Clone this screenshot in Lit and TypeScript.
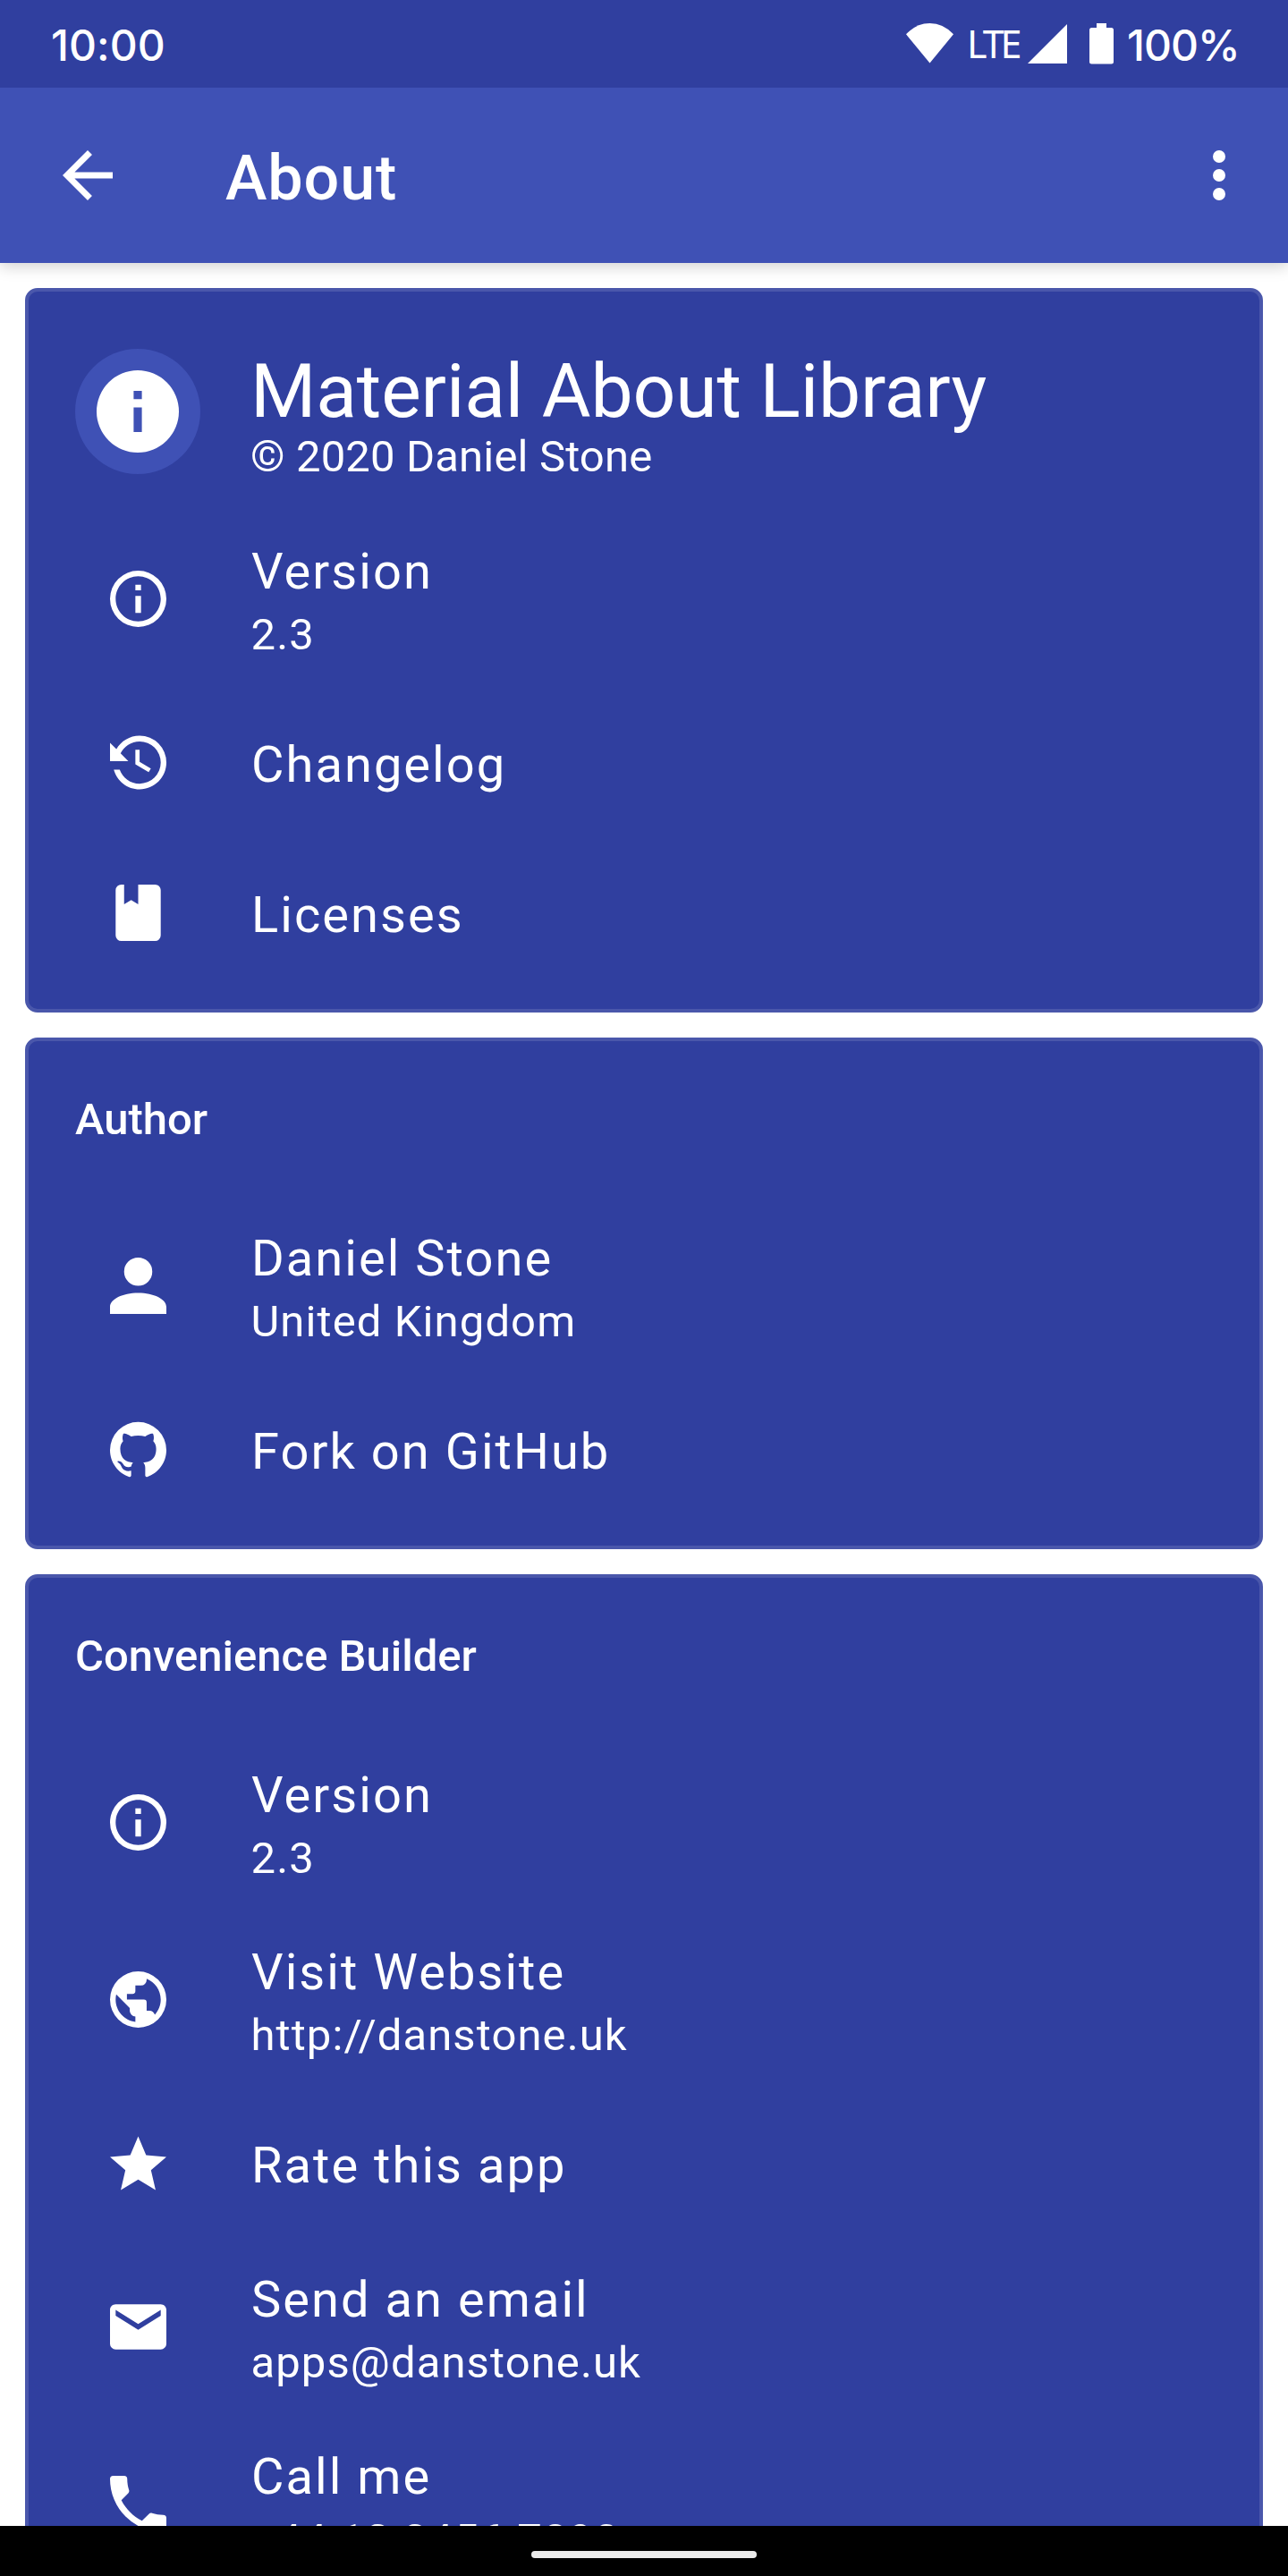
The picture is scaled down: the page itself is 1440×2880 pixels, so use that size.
import { LitElement, html, css, svg, nothing } from "lit";
import { customElement, property } from "lit/decorators.js";

interface Icon {
  box: string;
  path: string;
}

// Each viewBox is trimmed to the bounds of its glyph, so glyphs fill the icon slot.
const ICONS: Record<string, Icon> = {
  infoOutline: {
    box: "2 2 20 20",
    path: "M11 9h2V7h-2m1 13c-4.41 0-8-3.59-8-8s3.59-8 8-8 8 3.59 8 8-3.59 8-8 8m0-18A10 10 0 0 0 2 12a10 10 0 0 0 10 10 10 10 0 0 0 10-10A10 10 0 0 0 12 2m-1 15h2v-6h-2v6z",
  },
  info: {
    box: "2 2 20 20",
    path: "M13 9h-2V7h2m0 10h-2v-6h2m-1-9A10 10 0 0 0 2 12a10 10 0 0 0 10 10 10 10 0 0 0 10-10A10 10 0 0 0 12 2z",
  },
  history: {
    box: "2 2 20 19",
    path: "M11 7v5.11l4.71 2.79.79-1.28-4-2.37V7m0-5C8.97 2 5.91 3.92 4.27 6.77L2 4.5V11h6.5L5.75 8.25C6.96 5.73 9.5 4 12.5 4a7.5 7.5 0 0 1 7.5 7.5 7.5 7.5 0 0 1-7.5 7.5c-3.27 0-6.03-2.09-7.06-5h-2.1c1.1 4.03 4.77 7 9.16 7 5.24 0 9.5-4.25 9.5-9.5A9.5 9.5 0 0 0 12.5 2z",
  },
  book: {
    box: "4 2 16 20",
    path: "M18 22a2 2 0 0 0 2-2V4c0-1.11-.9-2-2-2h-6v7L9.500 7.500 7 9V2H6a2 2 0 0 0-2 2v16a2 2 0 0 0 2 2h12z",
  },
  account: {
    box: "4 4 16 16",
    path: "M12 4a4 4 0 0 1 4 4 4 4 0 0 1-4 4 4 4 0 0 1-4-4 4 4 0 0 1 4-4m0 10c4.42 0 8 1.79 8 4v2H4v-2c0-2.210 3.580-4 8-4z",
  },
  github: {
    box: "2 2 20 19.520",
    path: "M12 2A10 10 0 0 0 2 12c0 4.420 2.870 8.170 6.840 9.500.500.080.660-.230.660-.500v-1.690c-2.770.600-3.360-1.340-3.360-1.340-.460-1.160-1.110-1.470-1.110-1.470-.910-.620.070-.600.070-.600 1 .070 1.530 1.030 1.530 1.030.870 1.520 2.340 1.070 2.910.830.090-.650.350-1.090.630-1.340-2.220-.250-4.550-1.110-4.550-4.920 0-1.110.380-2 1.030-2.710-.100-.250-.450-1.290.100-2.640 0 0 .840-.270 2.750 1.020.790-.220 1.650-.330 2.500-.330s1.710.110 2.500.330c1.910-1.290 2.750-1.020 2.750-1.020.550 1.350.200 2.390.100 2.640.650.710 1.030 1.600 1.030 2.710 0 3.820-2.340 4.660-4.570 4.910.360.310.690.920.690 1.850V21c0 .270.160.590.670.500C19.140 20.160 22 16.420 22 12A10 10 0 0 0 12 2z",
  },
  earth: {
    box: "2 2 20 20",
    path: "M17.900 17.390c-.260-.800-1.010-1.390-1.900-1.390h-1v-3a1 1 0 0 0-1-1H8v-2h2a1 1 0 0 0 1-1V7h2a2 2 0 0 0 2-2v-.410c2.930 1.180 5 4.050 5 7.410 0 2.080-.800 3.970-2.100 5.390M11 19.930c-3.950-.490-7-3.850-7-7.930 0-.620.080-1.220.210-1.790L9 15v1a2 2 0 0 0 2 2m1-16A10 10 0 0 0 2 12a10 10 0 0 0 10 10 10 10 0 0 0 10-10A10 10 0 0 0 12 2z",
  },
  star: {
    box: "2 2 20 19",
    path: "M12 17.270 18.180 21l-1.640-7.030L22 9.240l-7.190-.620L12 2 9.190 8.620 2 9.240l5.450 4.730L5.820 21 12 17.270z",
  },
  email: {
    box: "2 4 20 16",
    path: "M20 8l-8 5-8-5V6l8 5 8-5m0-2H4c-1.110 0-2 .890-2 2v12a2 2 0 0 0 2 2h16a2 2 0 0 0 2-2V6c0-1.110-.900-2-2-2z",
  },
  phone: {
    box: "3 3 18 18",
    path: "M6.620 10.790c1.440 2.830 3.760 5.150 6.590 6.590l2.200-2.200c.280-.280.670-.360 1.020-.250 1.120.370 2.320.570 3.570.570a1 1 0 0 1 1 1V20a1 1 0 0 1-1 1A17 17 0 0 1 3 4a1 1 0 0 1 1-1h3.500a1 1 0 0 1 1 1c0 1.250.200 2.450.570 3.570.110.350.030.740-.250 1.020l-2.200 2.200z",
  },
};

const drawIcon = (name: string) => {
  const icon = ICONS[name];
  return html`<svg class="glyph" viewBox=${icon.box} aria-hidden="true">
    ${svg`<path fill="currentColor" d=${icon.path}></path>`}
  </svg>`;
};

@customElement("status-bar")
class StatusBar extends LitElement {
  static styles = css`
    :host {
      display: flex;
      height: 98px;
      background: #303f9f;
      color: #fff;
      font: 500 48px/98px Inter, Roboto, sans-serif;
      box-sizing: border-box;
      padding: 0 56px 0 57px;
    }
    .clock {
      flex: 1;
      padding-top: 2px;
      letter-spacing: 0.1px;
    }
    .wifi { width: 53px; height: 45px; margin: 26px 15px 0 0; }
    .lte {
      font: 400 43px/98px "Noto Sans", sans-serif;
      letter-spacing: -4px;
      width: 68px;
    }
    .signal { width: 44px; height: 44px; margin: 27px 25px 0 0; }
    .battery { width: 27px; height: 46px; margin: 26px 15px 0 0; }
    .level { padding-top: 2px; width: 124px; letter-spacing: -1px; }
  `;

  render() {
    return html`
      <span class="clock">10:00</span>
      <svg class="wifi" viewBox="0 0 53 45"><path fill="#fff" d="M0 12.300Q11.500 0 26.500 0T53 12.300L26.500 44.500z" /></svg>
      <span class="lte">LTE</span>
      <svg class="signal" viewBox="0 0 44 44"><path fill="#fff" d="M44 0V44H0z" /></svg>
      <svg class="battery" viewBox="0 0 27 46"><path fill="#fff" d="M8 0h11v5h5.500a2.500 2.500 0 0 1 2.500 2.500V43a2.500 2.500 0 0 1-2.500 2.500h-22A2.500 2.500 0 0 1 0 43V7.500A2.500 2.500 0 0 1 2.500 5H8z" /></svg>
      <span class="level">100%</span>
    `;
  }
}

@customElement("app-bar")
class AppBar extends LitElement {
  static styles = css`
    :host {
      display: flex;
      align-items: center;
      height: 196px;
      box-sizing: border-box;
      padding: 0 35px 0 56px;
      background: #3f51b5;
      color: #fff;
      box-shadow: 0 4px 16px rgba(0, 0, 0, 0.18);
    }
    .action { width: 84px; height: 84px; fill: #fff; }
    .title {
      flex: 1;
      margin: 6px 0 0 112px;
      font: 500 70px/82px Roboto, sans-serif;
      letter-spacing: 0.9px;
    }
  `;

  render() {
    return html`
      <svg class="action" viewBox="0 0 24 24"><path d="M20 11H7.830l5.590-5.590L12 4l-8 8 8 8 1.410-1.410L7.830 13H20v-2z" /></svg>
      <span class="title">About</span>
      <svg class="action" viewBox="0 0 24 24"><path d="M12 8a2 2 0 1 0 0-4 2 2 0 0 0 0 4zm0 2a2 2 0 1 0 0 4 2 2 0 0 0 0-4zm0 6a2 2 0 1 0 0 4 2 2 0 0 0 0-4z" /></svg>
    `;
  }
}

@customElement("about-header")
class AboutHeader extends LitElement {
  static styles = css`
    :host {
      display: flex;
      align-items: center;
      height: 220px;
      gap: 56px;
      color: #fff;
    }
    .avatar {
      display: flex;
      align-items: center;
      justify-content: center;
      width: 140px;
      height: 140px;
      border-radius: 50%;
      background: #3f51b5;
    }
    .glyph { width: 92px; height: 92px; }
    .text { display: flex; flex-direction: column; white-space: nowrap; }
    .name { font: 400 84px/98px Roboto, sans-serif; padding-top: 9px; letter-spacing: -0.12px; }
    .note { font: 400 49px/58px Roboto, sans-serif; margin-top: -5px; letter-spacing: 0.15px; }
  `;

  render() {
    return html`
      <div class="avatar">${drawIcon("info")}</div>
      <div class="text">
        <span class="name">Material About Library</span>
        <span class="note">© 2020 Daniel Stone</span>
      </div>
    `;
  }
}

@customElement("about-item")
class AboutItem extends LitElement {
  @property() icon = "";
  @property() text = "";
  @property() sub = "";

  static styles = css`
    :host {
      display: block;
      color: #fff;
    }
    .row {
      display: flex;
      align-items: center;
      gap: 56px;
      height: 168px;
    }
    .tall { height: 198px; }
    .slot {
      display: flex;
      align-items: center;
      justify-content: center;
      width: 140px;
    }
    .glyph { width: 63px; height: 63px; }
    .lines {
      display: flex;
      flex-direction: column;
      gap: 9px;
      padding-top: 6px;
      white-space: nowrap;
    }
    .text { font: 400 56px/66px Roboto, sans-serif; letter-spacing: 2.05px; padding-left: 1px; }
    .sub { font: 400 49px/58px Roboto, sans-serif; letter-spacing: 1.1px; padding-left: 0.5px; }
  `;

  render() {
    return html`
      <div class="row ${this.sub ? "tall" : ""}">
        <div class="slot">${drawIcon(this.icon)}</div>
        <div class="lines">
          <span class="text">${this.text}</span>
          ${this.sub ? html`<span class="sub">${this.sub}</span>` : nothing}
        </div>
      </div>
    `;
  }
}

@customElement("about-card")
class AboutCard extends LitElement {
  @property() heading = "";

  static styles = css`
    :host {
      display: block;
      box-sizing: border-box;
      border: 4px solid #4a57ab;
      border-radius: 14px;
      background: #303f9f;
      padding: 24px 52px;
    }
    .heading {
      height: 150px;
      box-sizing: border-box;
      padding-top: 35px;
      color: #fff;
      font: 500 49px/58px Roboto, sans-serif;
    }
  `;

  render() {
    return html`
      ${this.heading ? html`<div class="heading">${this.heading}</div>` : nothing}
      <slot></slot>
    `;
  }
}

interface Item {
  icon: string;
  text: string;
  sub?: string;
}

const APP: Item[] = [
  { icon: "infoOutline", text: "Version", sub: "2.3" },
  { icon: "history", text: "Changelog" },
  { icon: "book", text: "Licenses" },
];

const AUTHOR: Item[] = [
  { icon: "account", text: "Daniel Stone", sub: "United Kingdom" },
  { icon: "github", text: "Fork on GitHub" },
];

const CONVENIENCE: Item[] = [
  { icon: "infoOutline", text: "Version", sub: "2.3" },
  { icon: "earth", text: "Visit Website", sub: "http://danstone.uk" },
  { icon: "star", text: "Rate this app" },
  { icon: "email", text: "Send an email", sub: "apps@danstone.uk" },
  { icon: "phone", text: "Call me", sub: "+44 12 3456 7890" },
];

const drawItems = (items: Item[]) =>
  items.map((i) => html`<about-item .icon=${i.icon} .text=${i.text} .sub=${i.sub ?? ""}></about-item>`);

@customElement("app-root")
class AppRoot extends LitElement {
  static styles = css`
    :host {
      display: flex;
      flex-direction: column;
      width: 1440px;
      height: 2880px;
      overflow: hidden;
      background: #fff;
    }
    .status, .bar, .nav { flex: none; }
    .list {
      flex: 1;
      min-height: 0;
      overflow: hidden;
      display: flex;
      flex-direction: column;
      gap: 28px;
      padding: 28px 28px 0;
    }
    .card { flex: none; }
    .bar { z-index: 1; }
    .status { z-index: 2; }
    .nav {
      display: flex;
      align-items: center;
      justify-content: center;
      height: 56px;
      padding-top: 8px;
      box-sizing: border-box;
      background: #000;
    }
    .pill { width: 252px; height: 8px; border-radius: 4px; background: #ebebeb; }
  `;

  render() {
    return html`
      <status-bar class="status"></status-bar>
      <app-bar class="bar"></app-bar>
      <main class="list">
        <about-card class="card">
          <about-header></about-header>
          ${drawItems(APP)}
        </about-card>
        <about-card class="card" .heading=${"Author"}>${drawItems(AUTHOR)}</about-card>
        <about-card class="card" .heading=${"Convenience Builder"}>${drawItems(CONVENIENCE)}</about-card>
      </main>
      <div class="nav"><div class="pill"></div></div>
    `;
  }
}
